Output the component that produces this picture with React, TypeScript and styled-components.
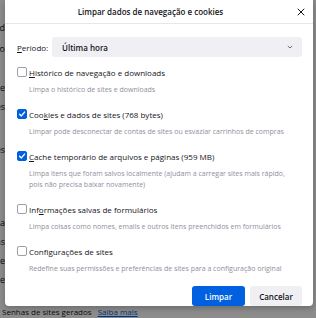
import React from "react";
import styled, { createGlobalStyle } from "styled-components";

const Global = createGlobalStyle`
  html, body { margin: 0; padding: 0; }
  body {
    width: 316px; height: 318px; overflow: hidden; background: #fff;
    font-family: "Open Sans", "Noto Sans", "Liberation Sans", sans-serif;
    color: #15141a;
  }
  * { box-sizing: border-box; }
`;

const Page = styled.div`
  position: relative;
  width: 316px;
  height: 318px;
  overflow: hidden;
  background: #fff;
`;

const EdgeColumn = styled.div`
  display: flex;
  flex-direction: column;
  width: 5px;
  padding-top: 22px;
  gap: 5px;
`;

const EdgeLine = styled.div<{ $gap?: number }>`
  direction: rtl;
  white-space: nowrap;
  overflow: hidden;
  font-size: 9px;
  line-height: 12px;
  color: #15141a;
  margin-top: ${(p) => p.$gap ?? 0}px;
`;

const FootLine = styled.div`
  position: absolute;
  left: 2px;
  top: 307px;
  font-size: 8px;
  line-height: 10px;
  white-space: nowrap;
  color: #15141a;
`;

const FootLink = styled.span`
  color: #0061e0;
  text-decoration: underline;
  margin-left: 6px;
`;

const Overlay = styled.div`
  position: absolute;
  inset: 0;
  background: rgba(0, 0, 0, 0.45);
  padding: 0 3px 0 5px;
`;

const Dialog = styled.div`
  width: 308px;
  height: 306px;
  background: #fff;
  border-radius: 0 0 4px 4px;
  display: flex;
  flex-direction: column;
  box-shadow: 0 2px 6px rgba(0, 0, 0, 0.25);
`;

const Header = styled.div`
  flex: none;
  height: 24px;
  border-bottom: 1px solid #e5e5ea;
  display: flex;
  align-items: center;
  padding: 0 7px 0 0;
`;

const Title = styled.div`
  flex: 1;
  text-align: center;
  font-size: 8px;
  font-weight: 600;
  color: #15141a;
`;

const Close = styled.button`
  border: 0;
  background: transparent;
  padding: 0;
  width: 10px;
  height: 12px;
  display: flex;
  align-items: center;
  justify-content: center;
`;

const Body = styled.div`
  flex: 1;
  min-height: 0;
  padding: 13px 11px 0 12px;
  display: flex;
  flex-direction: column;
`;

const PeriodRow = styled.div`
  display: flex;
  align-items: center;
  gap: 5px;
  margin-bottom: 8px;
`;

const PeriodLabel = styled.span`
  font-size: 8px;
  color: #15141a;
  width: 30px;
`;

const Select = styled.div`
  flex: 1;
  height: 20px;
  background: #f0f0f4;
  border-radius: 3px;
  display: flex;
  align-items: center;
  justify-content: space-between;
  padding: 0 8px 0 10px;
  font-size: 8px;
  font-weight: 600;
`;

const Option = styled.div`
  display: flex;
  flex-direction: column;
  margin-bottom: 12px;
  &:last-of-type { margin-bottom: 0; }
`;

const OptionHead = styled.label`
  display: flex;
  align-items: center;
  gap: 2px;
  height: 14px;
  font-size: 8px;
`;

const Box = styled.span<{ $on: boolean }>`
  width: 10px;
  height: 10px;
  border-radius: 2px;
  flex: none;
  display: flex;
  align-items: center;
  justify-content: center;
  background: ${(p) => (p.$on ? "#0061e0" : "#fff")};
  border: 1px solid ${(p) => (p.$on ? "#0061e0" : "#9e9ea6")};
`;

const Desc = styled.div`
  padding-left: 12px;
  margin-top: 5px;
  font-size: 7px;
  line-height: 11px;
  color: #8f8f9d;
`;

const Buttons = styled.div`
  margin-top: auto;
  padding: 0 0 4px;
  display: flex;
  justify-content: flex-end;
  gap: 5px;
`;

const Button = styled.button<{ $primary?: boolean }>`
  height: 20px;
  border: 0;
  border-radius: 3px;
  font-family: inherit;
  font-size: 8px;
  font-weight: 600;
  width: ${(p) => (p.$primary ? 53 : 52)}px;
  background: ${(p) => (p.$primary ? "#0061e0" : "#f0f0f4")};
  color: ${(p) => (p.$primary ? "#fff" : "#15141a")};
`;

const U = styled.span`
  text-decoration: underline;
`;

const Check = () => (
  <svg width="8" height="8" viewBox="0 0 10 10">
    <path d="M2 5.2 L4.2 7.4 L8.2 2.6" fill="none" stroke="#fff" strokeWidth="1.7" strokeLinecap="round" strokeLinejoin="round" />
  </svg>
);

type Opt = { label: React.ReactNode; desc: React.ReactNode; on: boolean };

const options: Opt[] = [
  { label: <><U>H</U>istórico de navegação e downloads</>, desc: "Limpa o histórico de sites e downloads", on: false },
  { label: <>Coo<U>k</U>ies e dados de sites (768 bytes)</>, desc: "Limpar pode desconectar de contas de sites ou esvaziar carrinhos de compras", on: true },
  { label: <><U>C</U>ache temporário de arquivos e páginas (959 MB)</>, desc: <>Limpa itens que foram salvos localmente (ajudam a carregar sites mais rápido,<br />pois não precisa baixar novamente)</>, on: true },
  { label: <>Inf<U>o</U>rmações salvas de formulários</>, desc: "Limpa coisas como nomes, emails e outros itens preenchidos em formulários", on: false },
  { label: <>Confi<U>g</U>urações de sites</>, desc: "Redefine suas permissões e preferências de sites para a configuração original", on: false },
];

export default function App() {
  return (
    <Page>
      <Global />
      <EdgeColumn>
        <EdgeLine>Senhas salvas d</EdgeLine>
        <EdgeLine $gap={4}>Exibir senhas salvas no</EdgeLine>
        <EdgeLine $gap={22}>Segurança e</EdgeLine>
        <EdgeLine $gap={2}>Permissões e cookies</EdgeLine>
        <EdgeLine $gap={26}>Dados de sites</EdgeLine>
        <EdgeLine $gap={56}>Senha principal da conta</EdgeLine>
        <EdgeLine $gap={2}>Alterar senhas</EdgeLine>
        <EdgeLine $gap={2}>Histórico de senhas e</EdgeLine>
        <EdgeLine $gap={2}>Configurações de</EdgeLine>
      </EdgeColumn>
      <FootLine>
        Senhas de sites gerados
        <FootLink>Saiba mais</FootLink>
      </FootLine>
      <Overlay>
        <Dialog>
          <Header>
            <Title>Limpar dados de navegação e cookies</Title>
            <Close aria-label="Fechar">
              <svg width="8" height="8" viewBox="0 0 8 8">
                <path d="M1 1 L7 7 M7 1 L1 7" stroke="#15141a" strokeWidth="1" strokeLinecap="round" />
              </svg>
            </Close>
          </Header>
          <Body>
            <PeriodRow>
              <PeriodLabel>
                <U>P</U>eríodo:
              </PeriodLabel>
              <Select>
                <span>Última hora</span>
                <svg width="8" height="6" viewBox="0 0 8 6">
                  <path d="M1.8 2 L4 4 L6.2 2" fill="none" stroke="#5b5b66" strokeWidth="0.9" />
                </svg>
              </Select>
            </PeriodRow>
            {options.map((o, i) => (
              <Option key={i}>
                <OptionHead>
                  <Box $on={o.on}>{o.on && <Check />}</Box>
                  <span>{o.label}</span>
                </OptionHead>
                <Desc>{o.desc}</Desc>
              </Option>
            ))}
            <Buttons>
              <Button $primary>Limpar</Button>
              <Button>Cancelar</Button>
            </Buttons>
          </Body>
        </Dialog>
      </Overlay>
    </Page>
  );
}
